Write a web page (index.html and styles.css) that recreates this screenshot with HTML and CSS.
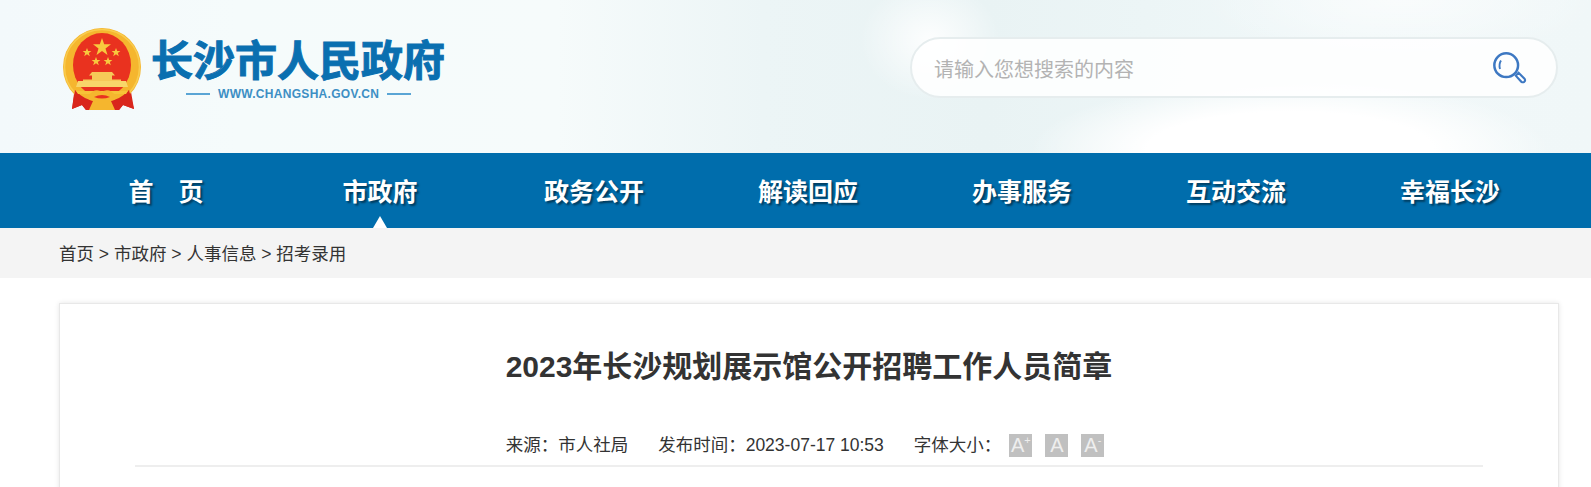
FILE: index.html
```html
<!DOCTYPE html>
<html lang="zh-CN">
<head>
  <meta charset="UTF-8">
  <title>2023年长沙规划展示馆公开招聘工作人员简章</title>
  <link rel="stylesheet" href="styles.css">
</head>
<body>
  <header class="header">
    <div class="logo">
      <svg class="emblem" viewBox="0 0 100 100" aria-hidden="true">
        <!-- ribbon -->
        <path d="M20 66 L75 66 L79 89 L68 85 L64 90 L31 90 L27 85 L17 89 Z" fill="#d9261c"/>
        <!-- gold ring -->
        <circle cx="47" cy="47" r="39" fill="#f5b62e"/>
        <circle cx="47" cy="47" r="37.5" fill="none" stroke="#f9cc4e" stroke-width="1.5"/>
        <path d="M20 70 Q33 84 47 80 Q61 84 74 70 L79 89 L68 85 L64 90 L31 90 L27 85 L17 89 Z" fill="#d9261c"/>
        <ellipse cx="47" cy="45" rx="29" ry="32" fill="#e9321f"/>
        <!-- stars -->
        <polygon points="47,18 49.2,24.3 56,24.3 50.5,28.4 52.5,35 47,31 41.5,35 43.5,28.4 38,24.3 44.8,24.3" fill="#f8c93e"/>
        <polygon points="32,28 33.2,31 36.4,31 33.8,33 34.8,36.2 32,34.3 29.2,36.2 30.2,33 27.6,31 30.8,31" fill="#f8c93e"/>
        <polygon points="61,28 62.2,31 65.4,31 62.8,33 63.8,36.2 61,34.3 58.2,36.2 59.2,33 56.6,31 59.8,31" fill="#f8c93e"/>
        <polygon points="41,37 42.2,40 45.4,40 42.8,42 43.8,45.2 41,43.3 38.2,45.2 39.2,42 36.6,40 39.8,40" fill="#f8c93e"/>
        <polygon points="53,37 54.2,40 57.4,40 54.8,42 55.8,45.2 53,43.3 50.2,45.2 51.2,42 48.6,40 51.8,40" fill="#f8c93e"/>
        <!-- gate -->
        <path d="M37 52 H57 L60 55.5 H57 V59.5 H66 V61 H28 V59.5 H37 V55.5 H34 Z" fill="#f6c958"/>
        <path d="M23 61 H71 L73 67 H21 Z" fill="#f8d66a"/>
        <path d="M21 71 H73 L71 74 H23 Z" fill="#f7c338"/>
        <!-- knot -->
        <path d="M33 76 Q40 67 47 72 Q54 67 61 76 Q62 80 56 81 L60 90 H34 L38 81 Q32 80 33 76 Z" fill="#f5b62e"/>
        <path d="M39 77 Q47 73 55 77 Q47 80 39 77 Z" fill="#e9321f"/>
      </svg>
      <div class="logo-text">
        <div class="logo-name">长沙市人民政府</div>
        <div class="logo-url"><span class="url-line"></span><span>WWW.CHANGSHA.GOV.CN</span><span class="url-line"></span></div>
      </div>
    </div>
    <form class="search">
      <input class="search-input" type="text" placeholder="请输入您想搜索的内容">
      <svg class="search-icon" viewBox="0 0 40 40" aria-hidden="true">
        <circle cx="16" cy="16" r="12.5" fill="none" stroke="#3d78c2" stroke-width="2.6"/>
        <path d="M9.5 20 Q8 15 10.5 11" fill="none" stroke="#3d78c2" stroke-width="2"/>
        <path d="M26 27 L29 24 L35.5 30.5 Q36.5 32 35 33.5 Q33.5 34.5 32 33.5 Z" fill="#fff" stroke="#3d78c2" stroke-width="2.2"/>
      </svg>
    </form>
  </header>

  <nav class="nav">
    <ul class="nav-list">
      <li class="nav-item">首　页</li>
      <li class="nav-item active">市政府</li>
      <li class="nav-item">政务公开</li>
      <li class="nav-item">解读回应</li>
      <li class="nav-item">办事服务</li>
      <li class="nav-item">互动交流</li>
      <li class="nav-item">幸福长沙</li>
    </ul>
  </nav>

  <div class="crumb">
    <div class="crumb-inner">首页 &gt; 市政府 &gt; 人事信息 &gt; 招考录用</div>
  </div>

  <main class="card">
    <h1 class="title">2023年长沙规划展示馆公开招聘工作人员简章</h1>
    <div class="meta">
      <span class="meta-item">来源：市人社局</span>
      <span class="meta-item">发布时间：2023-07-17 10:53</span>
      <span class="meta-size">字体大小：</span>
      <span class="size-btn">A<sup>+</sup></span>
      <span class="size-btn">A</span>
      <span class="size-btn">A<sup>-</sup></span>
    </div>
  </main>
</body>
</html>
```

FILE: styles.css
```css
html, body {
  margin: 0;
  padding: 0;
  height: 487px;
  overflow: hidden;
}
body {
  font-family: "Liberation Sans", "Noto Sans CJK SC", sans-serif;
  color: #333;
  background: #fff;
}
/* header with pale cloud background */
.header {
  height: 153px;
  box-sizing: border-box;
  display: flex;
  justify-content: space-between;
  padding: 20px 33px 0 55px;
  background:
    radial-gradient(ellipse 260px 70px at 1290px 150px, #fff 55%, transparent),
    radial-gradient(ellipse 70px 60px at 930px 40px, rgba(255,255,255,0.9), transparent),
    radial-gradient(ellipse 200px 60px at 1400px 0, rgba(255,255,255,0.6), transparent),
    linear-gradient(90deg, #f3f9fb, #f5fbfb 15%, #f6fbfb 35%, #ecf5f6 48%, #e9f3f4 62%, #ecf5f6 72%, #f1f8f9 85%, #f0f7f8);
}
.logo {
  display: flex;
  height: 100px;
}
.emblem {
  width: 100px;
  height: 100px;
  flex: none;
}
.logo-text {
  margin-left: -4px;
  padding-top: 13px;
}
.logo-name {
  font-family: "Noto Sans CJK SC", sans-serif;
  font-weight: 700;
  font-size: 42px;
  line-height: 50px;
  color: #0a6fb0;
  white-space: nowrap;
  -webkit-text-stroke: 1px #0a6fb0;
}
.logo-url {
  display: flex;
  align-items: center;
  gap: 8px;
  margin: 3px 0 0 35px;
  font-size: 12px;
  font-weight: 700;
  letter-spacing: 0.3px;
  line-height: 16px;
  color: #3d8fc4;
}
.url-line {
  width: 24px;
  height: 2px;
  background: #5aa5d5;
}
.search {
  width: 648px;
  height: 61px;
  box-sizing: border-box;
  margin-top: 17px;
  display: flex;
  align-items: center;
  justify-content: space-between;
  padding: 0 27px 0 22px;
  border: 2px solid #e6edee;
  border-radius: 31px;
  background: rgba(255,255,255,0.85);
}
.search-input {
  flex: 1;
  border: 0;
  outline: none;
  background: transparent;
  font-family: "Liberation Sans", "Noto Sans CJK SC", sans-serif;
  font-size: 20px;
  padding: 5px 0 0;
}
.search-input::placeholder {
  color: #b3b3b3;
  opacity: 1;
}
.search-icon {
  width: 38px;
  height: 38px;
  flex: none;
  margin-top: 3px;
}
.nav {
  height: 75px;
  background: #006dac;
}
.nav-list {
  list-style: none;
  margin: 0 0 0 59px;
  padding: 0;
  display: flex;
}
.nav-item {
  position: relative;
  width: 214px;
  height: 74px;
  line-height: 74px;
  text-align: center;
  font-family: "Noto Sans CJK SC", sans-serif;
  font-size: 25px;
  font-weight: 700;
  color: #fff;
  text-shadow: 2px 2px 2px rgba(0,0,0,0.45);
}
.nav-item.active::after {
  content: '';
  position: absolute;
  left: 50%;
  bottom: -1px;
  margin-left: -7.5px;
  border-left: 7.5px solid transparent;
  border-right: 7.5px solid transparent;
  border-bottom: 12px solid #fff;
}
.crumb {
  height: 50px;
  background: #f4f4f4;
}
.crumb-inner {
  margin-left: 59px;
  line-height: 52px;
  font-size: 17.5px;
  color: #333;
}
.card {
  width: 1500px;
  min-height: 300px;
  box-sizing: border-box;
  margin: 25px 0 0 59px;
  padding: 0 75px;
  background: #fff;
  border: 1px solid #e8e8e8;
  box-shadow: 0 0 5px rgba(0,0,0,0.1);
}
.title {
  margin: 40px 0 0;
  font-size: 30px;
  font-weight: 700;
  line-height: 46px;
  text-align: center;
  color: #333;
}
.meta {
  margin-top: 44px;
  height: 33px;
  display: flex;
  justify-content: center;
  align-items: flex-start;
  padding-right: 8px;
  font-size: 17.5px;
  line-height: 23px;
  border-bottom: 2px solid #eee;
  box-sizing: border-box;
}
.meta-item {
  margin-right: 30px;
}
.meta-size {
  margin-right: 8px;
}
.size-btn {
  width: 23px;
  height: 23px;
  margin-right: 13px;
  background: #c0c0c0;
  color: #eee;
  font-size: 20px;
  text-align: center;
  white-space: nowrap;
}
.size-btn:last-child {
  margin-right: 0;
}
.size-btn sup {
  font-size: 11px;
  line-height: 0;
}
```
